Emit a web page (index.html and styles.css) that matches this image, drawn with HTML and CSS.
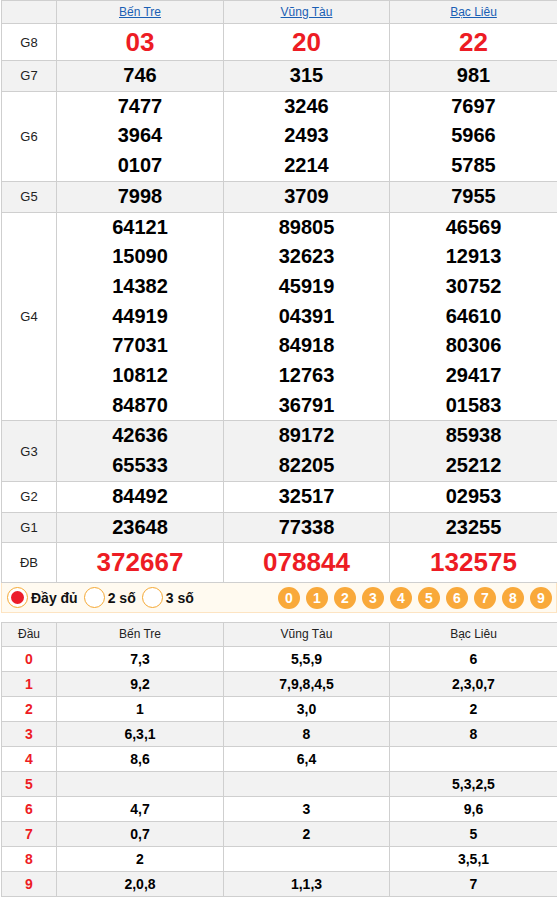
FILE: index.html
```html
<!DOCTYPE html>
<html lang="vi">
<head>
<meta charset="utf-8">
<title>XSMN</title>
<link rel="stylesheet" href="styles.css">
</head>
<body>
<div class="page">
  <table class="kq">
    <colgroup><col class="c1"><col class="c2"><col class="c3"><col class="c4"></colgroup>
    <tr class="head"><th></th><th><a href="#">Bến Tre</a></th><th><a href="#">Vũng Tàu</a></th><th><a href="#">Bạc Liêu</a></th></tr>
    <tr class="g8"><td class="lbl">G8</td><td><div class="n big">03</div></td><td><div class="n big">20</div></td><td><div class="n big">22</div></td></tr>
    <tr class="alt"><td class="lbl">G7</td><td><div class="n">746</div></td><td><div class="n">315</div></td><td><div class="n">981</div></td></tr>
    <tr><td class="lbl">G6</td>
      <td><div class="n">7477</div><div class="n">3964</div><div class="n">0107</div></td>
      <td><div class="n">3246</div><div class="n">2493</div><div class="n">2214</div></td>
      <td><div class="n">7697</div><div class="n">5966</div><div class="n">5785</div></td></tr>
    <tr class="alt"><td class="lbl">G5</td><td><div class="n">7998</div></td><td><div class="n">3709</div></td><td><div class="n">7955</div></td></tr>
    <tr><td class="lbl">G4</td>
      <td><div class="n">64121</div><div class="n">15090</div><div class="n">14382</div><div class="n">44919</div><div class="n">77031</div><div class="n">10812</div><div class="n">84870</div></td>
      <td><div class="n">89805</div><div class="n">32623</div><div class="n">45919</div><div class="n">04391</div><div class="n">84918</div><div class="n">12763</div><div class="n">36791</div></td>
      <td><div class="n">46569</div><div class="n">12913</div><div class="n">30752</div><div class="n">64610</div><div class="n">80306</div><div class="n">29417</div><div class="n">01583</div></td></tr>
    <tr class="alt"><td class="lbl">G3</td>
      <td><div class="n">42636</div><div class="n">65533</div></td>
      <td><div class="n">89172</div><div class="n">82205</div></td>
      <td><div class="n">85938</div><div class="n">25212</div></td></tr>
    <tr><td class="lbl">G2</td><td><div class="n">84492</div></td><td><div class="n">32517</div></td><td><div class="n">02953</div></td></tr>
    <tr class="alt"><td class="lbl">G1</td><td><div class="n">23648</div></td><td><div class="n">77338</div></td><td><div class="n">23255</div></td></tr>
    <tr class="db"><td class="lbl">ĐB</td><td><div class="n big">372667</div></td><td><div class="n big">078844</div></td><td><div class="n big">132575</div></td></tr>
  </table>

  <div class="filter">
    <div class="radios">
      <label class="radio"><span class="dot on"></span>Đầy đủ</label>
      <label class="radio"><span class="dot"></span>2 số</label>
      <label class="radio"><span class="dot"></span>3 số</label>
    </div>
    <div class="balls">
      <span class="ball">0</span><span class="ball">1</span><span class="ball">2</span><span class="ball">3</span><span class="ball">4</span><span class="ball">5</span><span class="ball">6</span><span class="ball">7</span><span class="ball">8</span><span class="ball">9</span>
    </div>
  </div>

  <table class="loto">
    <colgroup><col class="c1"><col class="c2"><col class="c3"><col class="c4"></colgroup>
    <tr class="head"><th>Đầu</th><th>Bến Tre</th><th>Vũng Tàu</th><th>Bạc Liêu</th></tr>
    <tr><td class="d">0</td><td>7,3</td><td>5,5,9</td><td>6</td></tr>
    <tr class="alt"><td class="d">1</td><td>9,2</td><td>7,9,8,4,5</td><td>2,3,0,7</td></tr>
    <tr><td class="d">2</td><td>1</td><td>3,0</td><td>2</td></tr>
    <tr class="alt"><td class="d">3</td><td>6,3,1</td><td>8</td><td>8</td></tr>
    <tr><td class="d">4</td><td>8,6</td><td>6,4</td><td></td></tr>
    <tr class="alt"><td class="d">5</td><td></td><td></td><td>5,3,2,5</td></tr>
    <tr><td class="d">6</td><td>4,7</td><td>3</td><td>9,6</td></tr>
    <tr class="alt"><td class="d">7</td><td>0,7</td><td>2</td><td>5</td></tr>
    <tr><td class="d">8</td><td>2</td><td></td><td>3,5,1</td></tr>
    <tr class="alt"><td class="d">9</td><td>2,0,8</td><td>1,1,3</td><td>7</td></tr>
  </table>
</div>
</body>
</html>
```

FILE: styles.css
```css
html, body {
  margin: 0;
  padding: 0;
  background: #fff;
}
body {
  font-family: "Liberation Sans", Arial, sans-serif;
  color: #111;
}
.page {
  padding-left: 1px;
  width: 556px;
}
table {
  border-collapse: collapse;
  table-layout: fixed;
  width: 556px;
}
col.c1 { width: 55px; }
col.c2 { width: 167px; }
col.c3 { width: 166px; }
col.c4 { width: 168px; }

td, th {
  border: 1px solid #cfcfcf;
  padding: 0;
  text-align: center;
  vertical-align: middle;
}
tr.head th {
  background: #f2f2f2;
  height: 22px;
  font-weight: normal;
  font-size: 12px;
  line-height: 22px;
}
tr.head a {
  color: #1a5fb4;
  text-decoration: underline;
}
tr.alt td {
  background: #f2f2f2;
}
.kq .lbl {
  font-size: 13px;
  color: #222;
}
.n {
  font-size: 20px;
  font-weight: bold;
  line-height: 29.7px;
  color: #000;
}
.n.big {
  font-size: 26px;
  color: #ed1c24;
}
tr.g8 .n { line-height: 36px; }
tr.db .n { line-height: 39px; }

.filter {
  display: flex;
  align-items: center;
  justify-content: space-between;
  height: 29px;
  background: #fffaf0;
  border: 1px solid #fde4c2;
  border-top: none;
  padding: 0 4px 0 5px;
  margin-bottom: 9px;
}
.radios {
  display: flex;
  align-items: center;
}
.radio {
  display: flex;
  align-items: center;
  font-size: 14px;
  font-weight: bold;
  color: #111;
  margin-right: 6px;
}
.dot {
  width: 19px;
  height: 19px;
  border: 1px solid #f5a833;
  border-radius: 50%;
  background: #fff;
  margin-right: 3px;
  display: flex;
  align-items: center;
  justify-content: center;
}
.dot.on::after {
  content: "";
  width: 13px;
  height: 13px;
  border-radius: 50%;
  background: #ec1c2a;
}
.balls {
  display: flex;
  gap: 6px;
}
.ball {
  width: 22px;
  height: 22px;
  border-radius: 50%;
  background: #f9a93a;
  color: #fff;
  font-size: 14px;
  font-weight: bold;
  line-height: 22px;
  text-align: center;
}

.loto tr.head th {
  height: 23px;
  line-height: 23px;
  color: #222;
}
.loto td {
  height: 24px;
  line-height: 24px;
  font-size: 14px;
  font-weight: bold;
  color: #000;
}
.loto td.d {
  color: #ed1c24;
}
```
